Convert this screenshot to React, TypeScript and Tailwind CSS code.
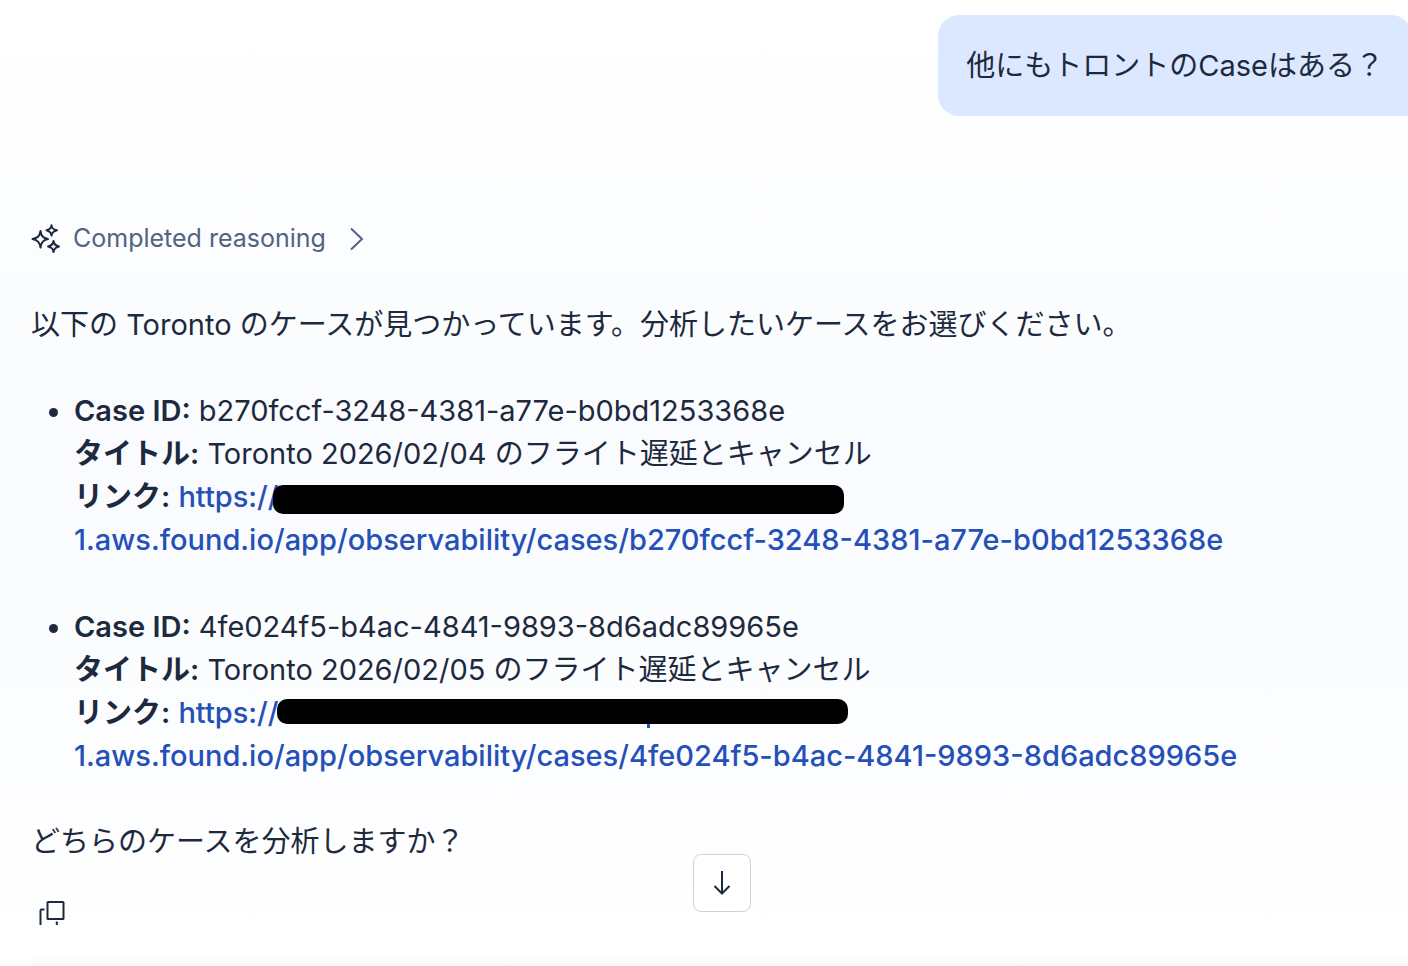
interface CaseItem {
  id: string;
  title: string;
  redaction: string;
  leftover?: boolean;
}

const cases: CaseItem[] = [
  {
    id: 'b270fccf-3248-4381-a77e-b0bd1253368e',
    title: 'Toronto 2026/02/04 のフライト遅延とキャンセル',
    redaction: '-ml-1.5 h-[29px] w-[571px]',
  },
  {
    id: '4fe024f5-b4ac-4841-9893-8d6adc89965e',
    title: 'Toronto 2026/02/05 のフライト遅延とキャンセル',
    redaction: '-ml-0.5 mb-2 h-[25px] w-[571px]',
    leftover: true,
  },
];

function SparklesIcon() {
  return (
    <svg width="30" height="30" viewBox="0 0 30 30" fill="none" stroke="#1d2a3e" strokeWidth="2" strokeLinejoin="round" aria-hidden="true">
      <path d="M9.500 7C10.300 12 11.800 14 17 15C11.800 16.200 10.300 18.500 9.500 23.500C8.700 18.500 7 16.200 1.500 15C7 14 8.700 12 9.500 7Z" />
      <path d="M20.500 1.300C21 4.500 22.200 5.500 26 6.300C22.200 7.200 21 8.300 20.500 11.500C20 8.300 18.800 7.200 15.500 6.300C18.800 5.500 20 4.500 20.500 1.300Z" />
      <path d="M22.500 17C23 20.300 24.300 21.700 28 22.500C24.300 23.300 23 24.500 22.500 28C22 24.500 20.800 23.300 17 22.500C20.800 21.700 22 20.300 22.500 17Z" />
    </svg>
  );
}

function CopyIcon() {
  return (
    <svg width="28" height="28" viewBox="0 0 28 28" fill="none" stroke="#1d2a3e" strokeWidth="2" aria-hidden="true">
      <rect x="9.500" y="3" width="16" height="17" rx="0.500" />
      <path d="M2.500 26V11.500Q2.500 10.500 3.500 10.500H6.500M18.800 22.500V26" />
    </svg>
  );
}

export default function App() {
  return (
    <div className="relative min-h-screen overflow-hidden bg-linear-to-b from-white via-[#f9fbfe] to-white font-[Inter,'Noto_Sans_CJK_JP',sans-serif] text-[29px] leading-[43px] text-[#1d2a3e]">
      <main className="relative -mr-1 ml-[31px] pt-[15px] pb-6">
        <div className="flex justify-end">
          <p className="rounded-t-[21px] rounded-bl-[21px] bg-[#dbe8ff] px-7 py-[29px]">他にもトロントのCaseはある？</p>
        </div>

        <button type="button" className="mt-[101px] flex items-center gap-3 text-[25px] text-[#516381]">
          <SparklesIcon />
          <span>Completed reasoning</span>
          <svg className="ml-3" width="14" height="24" viewBox="0 0 14 24" fill="none" stroke="#516381" strokeWidth="2" aria-hidden="true">
            <path d="M1 1.500L12 12L1 22.500" />
          </svg>
        </button>

        <p className="mt-[43px]">以下の Toronto のケースが見つかっています。分析したいケースをお選びください。</p>

        <ul className="mt-[43px] list-disc space-y-11 pl-[43px]">
          {cases.map((item) => (
            <li key={item.id}>
              <strong className="font-semibold">Case ID:</strong> {item.id}
              <br />
              <strong className="font-semibold">タイトル:</strong> {item.title}
              <br />
              <strong className="font-semibold">リンク:</strong>{' '}
              <a href="#" className="font-medium text-[#2450b8]">
                https://
                <span className={`relative inline-block rounded-[10px] bg-black align-middle ${item.redaction}`}>
                  {item.leftover && <span className="absolute top-full left-[370px] h-1 w-[3px] bg-[#2450b8]" />}
                </span>
                <br />
                1.aws.found.io/app/observability/cases/{item.id}
              </a>
            </li>
          ))}
        </ul>

        <p className="mt-[43px]">どちらのケースを分析しますか？</p>

        <button type="button" aria-label="Copy message" className="mt-9 ml-[7px] block">
          <CopyIcon />
        </button>

        <button
          type="button"
          aria-label="Scroll to bottom"
          className="absolute bottom-[39px] left-1/2 flex size-[58px] -translate-x-1/2 items-center justify-center rounded-lg border border-[#cad3e2] bg-white"
        >
          <svg width="18" height="24" viewBox="0 0 18 24" fill="none" stroke="#1d2a3e" strokeWidth="2" aria-hidden="true">
            <path d="M9 0V22M1.500 15L9 22.500L16.500 15" />
          </svg>
        </button>
      </main>
      <div className="absolute right-0 bottom-0 left-8 h-3 bg-linear-to-b from-transparent to-[#f8f8f9]" />
    </div>
  );
}
